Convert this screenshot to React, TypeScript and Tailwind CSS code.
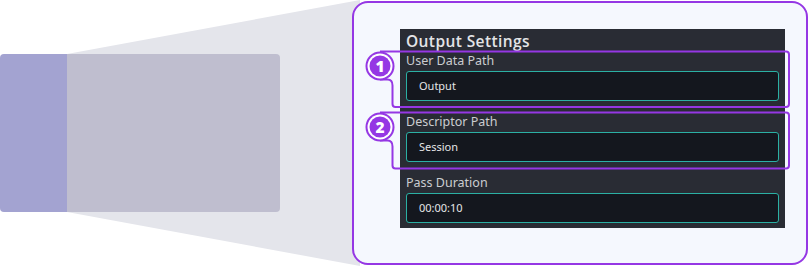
import React from "react";

const PURPLE = "#9537e4";

function Field({ label, value }: { label: string; value: string }) {
  return (
    <div className="flex flex-col">
      <div className="h-[16px] leading-[16px] text-[12.5px] text-[#cbccd0] mb-[2px]" style={{ fontFamily: '"Noto Sans", sans-serif' }}>
        {label}
      </div>
      <div className="h-[30px] rounded-[3px] border border-[#2bb0a4] bg-[#14171e] flex items-center pl-[12px] text-[11px] text-[#e4e5e7]" style={{ fontFamily: '"Noto Sans", sans-serif' }}>
        {value}
      </div>
    </div>
  );
}

function Callout({ top, bottom, n }: { top: number; bottom: number; n: string }) {
  const cx = 380;
  const cy = top + 14.5;
  const r = 13.5;
  const left = 392.5;
  const right = 789;
  const d = `M ${cx} ${top} H ${right - 3} Q ${right} ${top} ${right} ${top + 3} V ${bottom - 3} Q ${right} ${bottom} ${right - 3} ${bottom} H ${left + 3} Q ${left} ${bottom} ${left} ${bottom - 3} V ${cy + r + 6} Q ${left} ${cy + r} ${left - 5} ${cy + r} H ${cx}`;
  return (
    <g>
      <path d={d} fill="none" stroke={PURPLE} strokeWidth={2} />
      <circle cx={cx} cy={cy} r={r + 1} fill={PURPLE} />
      <circle cx={cx} cy={cy} r={r - 1} fill="#ffffff" />
      <circle cx={cx} cy={cy} r={r - 3} fill={PURPLE} />
      <text x={cx} y={cy + 5.5} textAnchor="middle" fill="#ffffff" fontSize="15.5" fontWeight="800" fontFamily='"Open Sans", sans-serif'>
        {n}
      </text>
    </g>
  );
}

export default function App() {
  return (
    <div className="relative w-[810px] h-[266px] bg-white overflow-hidden">
      <svg className="absolute inset-0" width="810" height="266" viewBox="0 0 810 266">
        <polygon points="67,54 360,0 360,266 67,212" fill="#e4e5eb" />
      </svg>
      <div className="relative flex w-full h-full">
        <div className="mt-[54px] w-[280px] h-[158px] rounded-[4px] overflow-hidden flex">
          <div className="w-[67px] h-full bg-[#a3a3d1]" />
          <div className="flex-1 h-full bg-[#bfbecf]" />
        </div>
        <div className="ml-[72px] mt-[1px] w-[456px] h-[264px] rounded-[16px] border-2 border-[#9537e4] bg-[#f5f8fe] pl-[46px] pt-[26px]">
          <div className="w-[385px] bg-[#292c34] px-[6px] pt-[2px] pb-[5px] flex flex-col">
            <div className="h-[20px] leading-[20px] text-[15.5px] font-semibold tracking-[0.4px] text-[#e3e4e7] mb-[2px]" style={{ fontFamily: '"Open Sans", sans-serif' }}>
              Output Settings
            </div>
            <Field label="User Data Path" value="Output" />
            <div className="h-[13px]" />
            <Field label="Descriptor Path" value="Session" />
            <div className="h-[13px]" />
            <Field label="Pass Duration" value="00:00:10" />
          </div>
        </div>
      </div>
      <svg className="absolute inset-0 pointer-events-none" width="810" height="266" viewBox="0 0 810 266">
        <Callout top={51.5} bottom={107} n="1" />
        <Callout top={112.5} bottom={168.5} n="2" />
      </svg>
    </div>
  );
}
